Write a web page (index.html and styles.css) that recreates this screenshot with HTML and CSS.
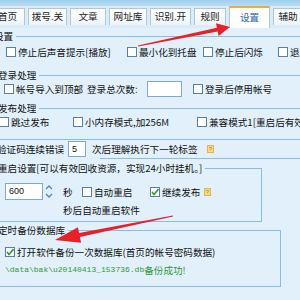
FILE: index.html
```html
<!DOCTYPE html>
<html lang="zh-CN">
<head>
<meta charset="utf-8">
<title>设置</title>
<link rel="stylesheet" href="styles.css">
</head>
<body>
<div class="topbar"></div>
<nav class="tabs">
  <div class="tab t1">首页</div>
  <div class="tab t2">拨号.关</div>
  <div class="tab t3">文章</div>
  <div class="tab t4">网址库</div>
  <div class="tab t5">识别.开</div>
  <div class="tab t6">规则</div>
  <div class="tab active t7">设置</div>
  <div class="tab t8">辅助</div>
</nav>
<main class="panel">
  <section class="grp g-set">
    <div class="gtitle gt-set">设置</div>
    <div class="row r-set">
      <div class="opt o-sound"><span class="cb"></span><span>停止后声音提示[播放]</span></div>
      <div class="opt o-tray"><span class="cb"></span><span>最小化到托盘</span></div>
      <div class="opt o-flash"><span class="cb"></span><span>停止后闪烁</span></div>
      <div class="opt"><span class="cb"></span><span>退出确认</span></div>
    </div>
  </section>

  <section class="grp g-login">
    <div class="gtitle">登录处理</div>
    <div class="row r-login">
      <div class="opt o-import"><span class="cb"></span><span>帐号导入到顶部</span></div>
      <span class="lbl l-total">登录总次数:</span>
      <span class="input i-total"></span>
      <div class="opt o-disable"><span class="cb"></span><span>登录后停用帐号</span></div>
    </div>
  </section>

  <section class="grp g-pub">
    <div class="gtitle">发布处理</div>
    <div class="row r-pub">
      <div class="opt o-skip"><span class="cb"></span><span>跳过发布</span></div>
      <div class="opt o-lowmem"><span class="cb"></span><span>小内存模式,加256M</span></div>
      <div class="opt"><span class="cb"></span><span>兼容模式1[重启后有效]</span></div>
    </div>
  </section>

  <div class="row r-verify">
    <span class="lbl l-verify">验证码连续错误</span>
    <span class="input i-verify">5</span>
    <span class="lbl l-next">次后理解执行下一轮标签</span>
    <span class="help">?</span>
  </div>
  <div class="sep"></div>

  <section class="grp box g-restart">
    <div class="gtitle">重启设置[可以有效回收资源，实现24小时挂机。]</div>
    <div class="row r-restart">
      <span class="input i-secs">600</span>
      <svg class="spin" width="8" height="17" viewBox="0 0 8 17"><path d="M1 6 L4 3 L7 6 M1 11 L4 14 L7 11" fill="none" stroke="#4f86c0" stroke-width="1.3"/></svg>
      <span class="lbl l-sec">秒</span>
      <div class="opt o-auto"><span class="cb"></span><span>自动重启</span></div>
      <div class="opt o-cont"><span class="cb"><svg width="8" height="8" viewBox="0 0 8 8"><path d="M1 4 L3 6.5 L7.5 1" fill="none" stroke="#2f9a2f" stroke-width="1.6"/></svg></span><span>继续发布</span></div>
      <span class="help">?</span>
    </div>
    <div class="row r-after">秒后自动重启软件</div>
  </section>

  <section class="grp box g-backup">
    <div class="gtitle">定时备份数据库</div>
    <div class="row r-backup">
      <div class="opt"><span class="cb"><svg width="8" height="8" viewBox="0 0 8 8"><path d="M1 4 L3 6.5 L7.5 1" fill="none" stroke="#2f9a2f" stroke-width="1.6"/></svg></span><span>打开软件备份一次数据库(首页的帐号密码数据)</span></div>
    </div>
    <div class="row r-ok"><span class="mono">\data\bak\u20140413_153736.db</span><span>备份成功!</span></div>
  </section>
</main>

<svg class="arrows" width="300" height="300" viewBox="0 0 300 300">
  <polygon points="137.9,45.4 216.9,27.8 216,23.2 230,27 218.6,36 217.7,31.4 138.1,46.6" fill="#e8202a"/>
  <polygon points="172.9,215.4 79.1,233 77.9,227.2 55,240 81.1,242.8 79.9,237 173.1,216.6" fill="#e8202a"/>
</svg>
</body>
</html>
```

FILE: styles.css
```css
html, body {
  margin: 0;
  padding: 0;
}
body {
  width: 300px;
  height: 300px;
  overflow: hidden;
  position: relative;
  background: #e1f0fa;
  font-family: "Noto Sans CJK SC", "Noto Sans", sans-serif;
  font-size: 9.6px;
  line-height: 12px;
  color: #111;
}

.topbar {
  height: 6px;
  background: linear-gradient(#9fd0ee, #b8dcf2);
}

.tabs {
  display: flex;
  align-items: flex-end;
  gap: 3px;
  height: 22px;
  margin-left: -10px;
  background: #d9ecf8;
}
.tab {
  box-sizing: border-box;
  height: 17px;
  margin-bottom: 3px;
  border: 1px solid #b3c4d6;
  border-bottom: none;
  background: linear-gradient(#ffffff, #eef3f8);
  text-align: center;
  line-height: 15px;
  color: #222;
  flex: none;
  overflow: hidden;
}
.t1 { width: 35px; }
.t2 { width: 39px; }
.t3 { width: 36px; }
.t4 { width: 38px; }
.t5 { width: 41px; }
.t6 { width: 32px; }
.t7 { width: 41px; }
.t8 { width: 30px; }
.tab.active {
  height: 22px;
  margin-bottom: 0;
  background: #ffffff;
  border-top: 2px solid #f2a93b;
  color: #2b63b8;
  line-height: 19px;
}

.panel {
  margin-left: -10px;
  width: 330px;
}

.grp {
  border-top: 1px solid #86bfe0;
}
.gtitle {
  width: max-content;
  margin-top: -7px;
  margin-left: 8px;
  padding-right: 3px;
  background: #e1f0fa;
  height: 12px;
  line-height: 12px;
  overflow: hidden;
}
.gt-set { margin-left: 4px; }

.row {
  display: flex;
  align-items: center;
  white-space: nowrap;
}
.opt {
  display: flex;
  align-items: center;
  flex: none;
  height: 12px;
}
.cb {
  box-sizing: border-box;
  width: 10px;
  height: 10px;
  margin-right: 2px;
  border: 1px solid #5a7ea6;
  background: #fff;
  display: flex;
  align-items: center;
  justify-content: center;
  flex: none;
}
.lbl { flex: none; height: 12px; }
.input {
  box-sizing: border-box;
  flex: none;
  background: #fff;
  border: 1px solid #7fa9cf;
  padding-left: 3px;
  font-family: "Liberation Sans", sans-serif;
  font-size: 9px;
  line-height: 14px;
}
.help {
  box-sizing: border-box;
  width: 7px;
  height: 8px;
  background: #f6dc8a;
  border: 1px solid #e2b453;
  color: #a8741c;
  font-family: "Liberation Sans", sans-serif;
  font-size: 6px;
  line-height: 6px;
  text-align: center;
  flex: none;
}

.g-set { margin-top: 8px; }
.r-set { margin-top: 4px; height: 12px; padding-left: 16px; }
.o-sound { width: 121px; }
.o-tray { width: 76px; }
.o-flash { width: 75px; }

.g-login { margin-top: 17px; }
.r-login { margin-top: 0; height: 16px; padding-left: 14px; }
.o-import { width: 83px; }
.l-total { width: 60px; }
.i-total { width: 35px; height: 16px; }
.o-disable { margin-left: 11px; }

.g-pub {
  margin-top: 11px;
  border-bottom: 1px solid #86bfe0;
  padding-bottom: 11px;
}
.r-pub { margin-top: 2px; height: 12px; padding-left: 9px; }
.o-skip { width: 74px; }
.o-lowmem { width: 124px; }

.r-verify { margin-top: 1px; height: 16px; padding-left: 7px; }
.l-verify { width: 71px; }
.i-verify { width: 18px; height: 16px; }
.l-next { margin-left: 6px; width: 115px; }
.sep {
  margin-top: 1px;
  margin-left: 110px;
  height: 1px;
  background: #86bfe0;
}

.box {
  box-sizing: border-box;
  border-right: 1px solid #86bfe0;
  border-bottom: 1px solid #86bfe0;
}
.g-restart {
  margin-top: 9px;
  width: 272px;
  padding-bottom: 5px;
}
.r-restart { margin-top: 9px; height: 17px; padding-left: 15px; }
.i-secs { width: 38px; height: 17px; line-height: 15px; }
.spin { margin-left: 2px; flex: none; }
.l-sec { margin-left: 10px; width: 19px; }
.o-auto { width: 68px; }
.o-cont { width: 54px; }
.r-after { margin-top: 4px; height: 12px; padding-left: 73px; }

.g-backup {
  margin-top: 8px;
  width: 291px;
  padding-bottom: 10px;
}
.r-backup { margin-top: 10px; height: 12px; padding-left: 15px; }
.r-ok {
  margin-top: 6px;
  height: 12px;
  padding-left: 15px;
  color: #2e9a34;
}
.mono {
  font-family: "Liberation Mono", monospace;
  font-size: 8px;
}

.arrows {
  position: absolute;
  left: 0;
  top: 0;
  pointer-events: none;
}
```
